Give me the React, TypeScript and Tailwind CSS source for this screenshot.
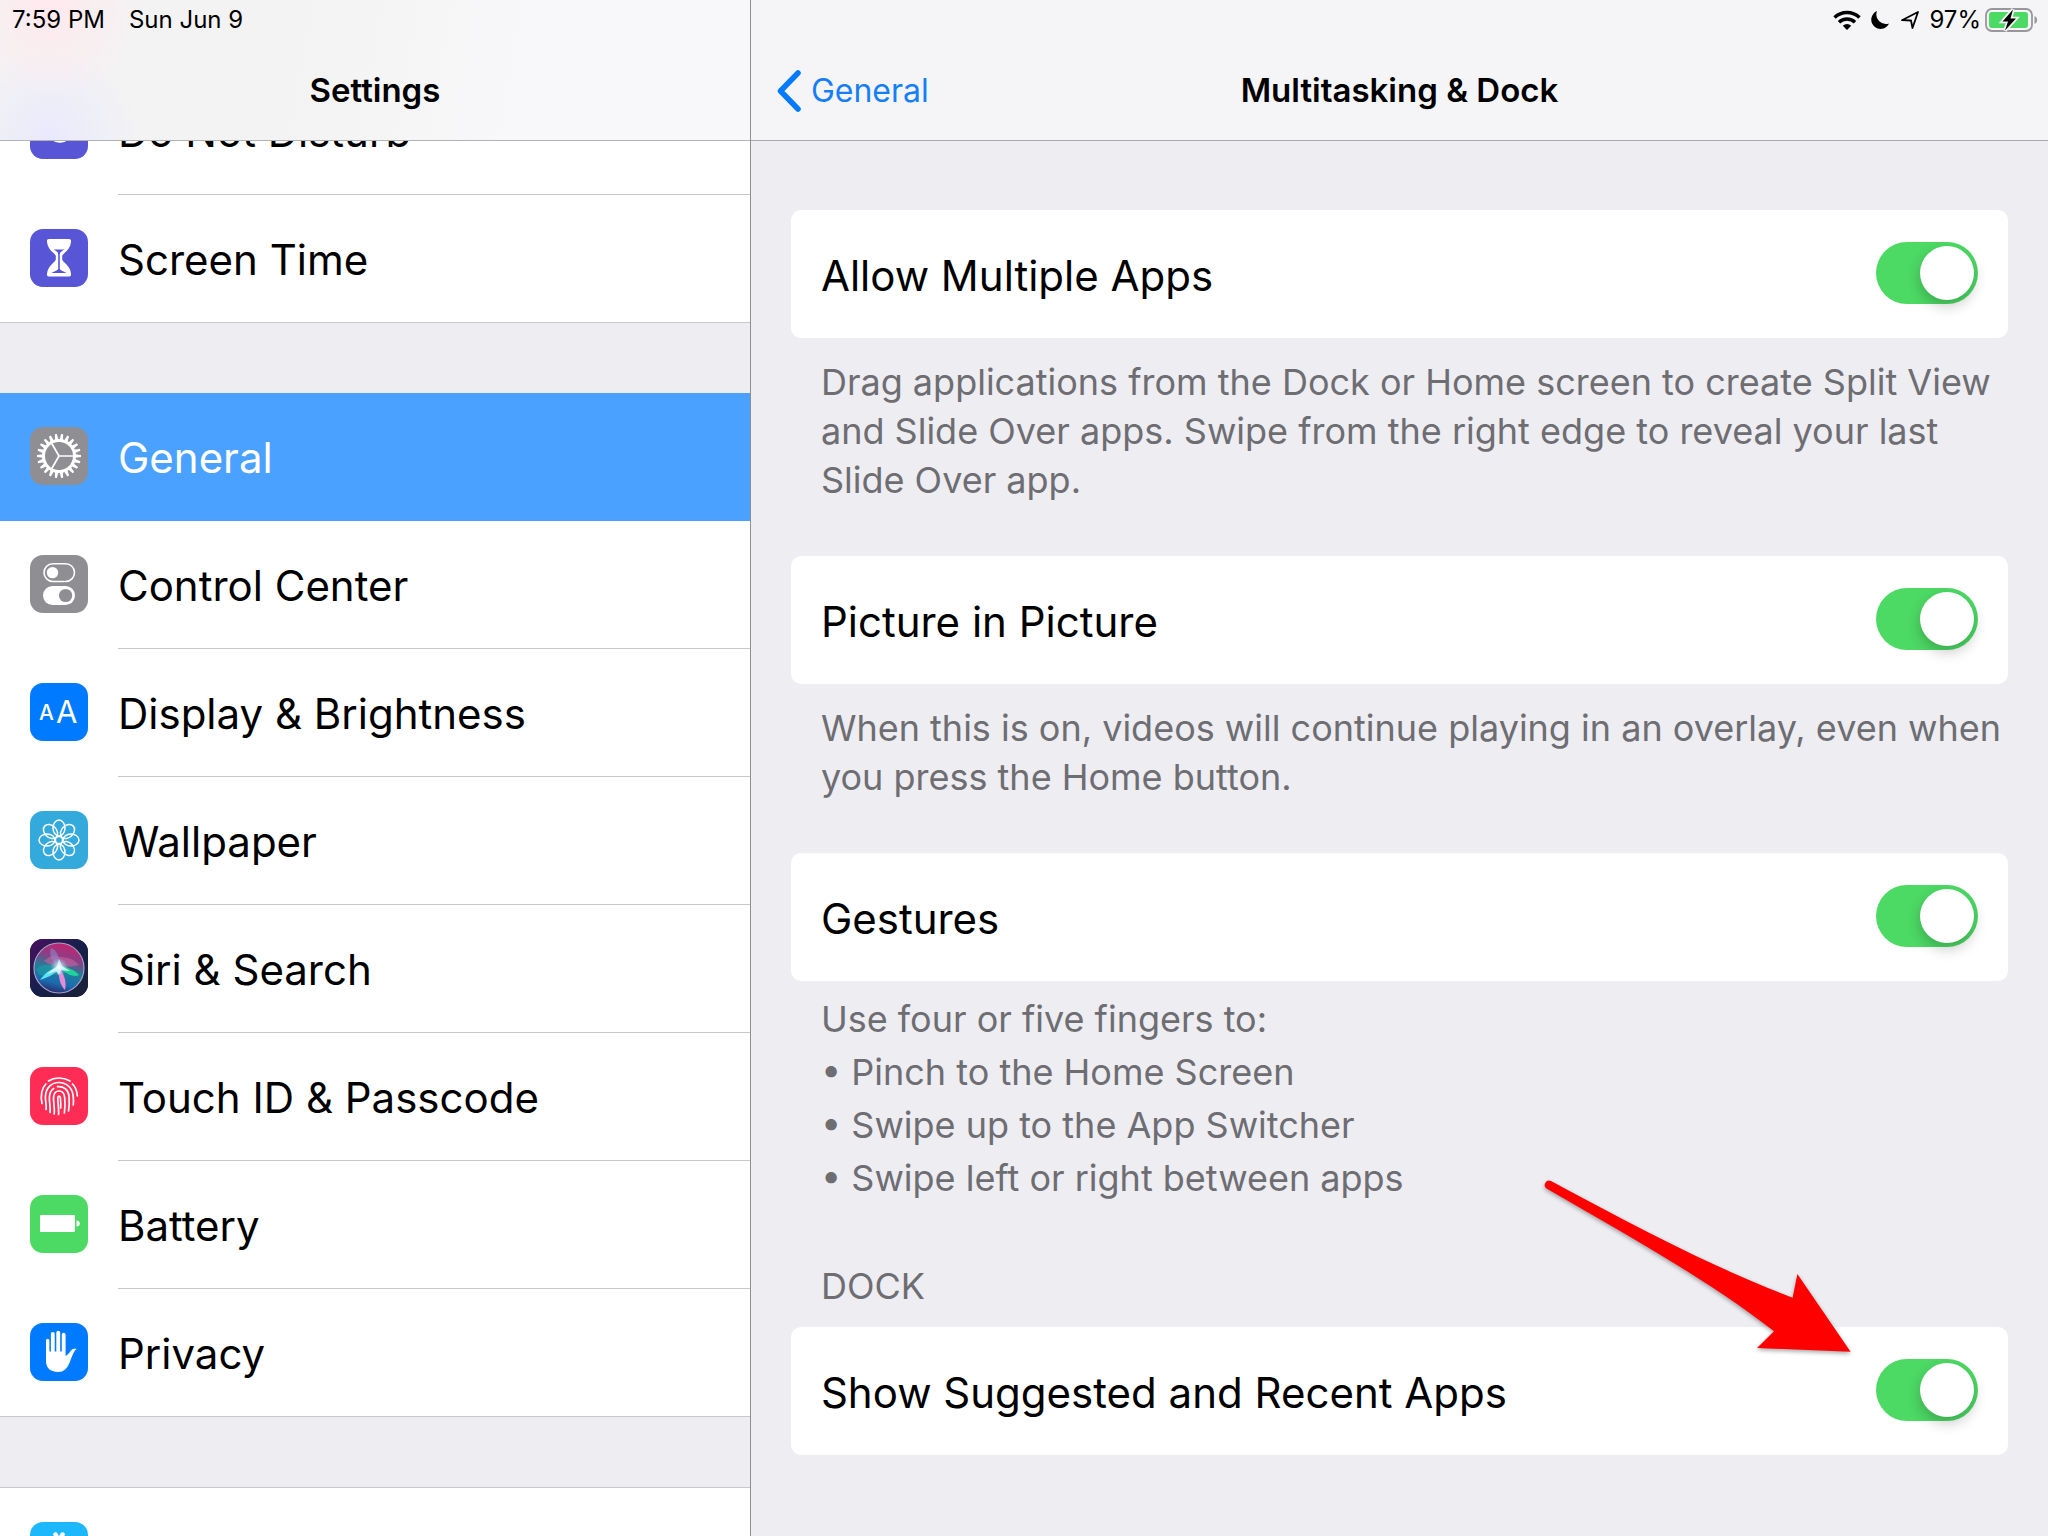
import React, { useState } from "react";

type IconProps = { children: React.ReactNode; bg: string };

function Tile({ children, bg }: IconProps) {
  return (
    <svg viewBox="0 0 58 58" className={"mb-0.5 size-[58px] shrink-0 rounded-[13px] " + bg} aria-hidden="true">
      {children}
    </svg>
  );
}

const ring = (n: number) => Array.from({ length: n }, (_, i) => (360 / n) * i);

const MoonIcon = () => (
  <Tile bg="bg-[#5856d6]">
    <path d="M24 16a13.500 13.500 0 1 0 18 18A13 13 0 0 1 24 16Z" fill="#fff" />
  </Tile>
);

const HourglassIcon = () => (
  <Tile bg="bg-[#5856d6]">
    <path
      d="M19 10h20c1.600 0 2.200 1 2 3-.6 5-3 7.800-6.500 11-2 2-3 3-3 4.800s1 2.800 3 4.700c3.500 3.300 6 6.500 6.500 11 .2 2-.5 3-2 3H19c-1.600 0-2.200-1-2-3 .6-4.500 3-7.700 6.500-11 2-1.900 3-2.900 3-4.700s-1-2.800-3-4.800C20 20.800 17.600 18 17 13c-.2-2 .4-3 2-3Z"
      fill="#fff"
    />
    <path d="M23.500 20.500h11c-2.500 1.200-4.500 2.500-4.700 4.500v15c.4 1.500 4.500 2.500 6.700 4h-15c2.200-1.500 6.300-2.500 6.700-4V25c-.2-2-2.200-3.300-4.700-4.500Z" fill="#5856d6" />
    <path d="M26.800 26v13.500M31.200 26v13.500" stroke="#fff" strokeWidth="2" />
  </Tile>
);

const GearIcon = () => (
  <Tile bg="bg-[#8e8e93]">
    <g stroke="#fff" fill="none">
      <circle cx="29" cy="29" r="15.500" strokeWidth="3" />
      {ring(22).map((a) => (
        <path key={a} d="M45 27.200L51 28v2l-6 .8Z" fill="#fff" stroke="none" transform={`rotate(${a} 29 29)`} />
      ))}
      {ring(3).map((a) => (
        <path key={a} d="M29 29h15" strokeWidth="1.700" transform={`rotate(${a} 29 29)`} />
      ))}
    </g>
  </Tile>
);

const SwitchesIcon = () => (
  <Tile bg="bg-[#8e8e93]">
    <rect x="14" y="8.700" width="30.500" height="17.800" rx="8.900" fill="none" stroke="#fff" strokeWidth="1.600" />
    <circle cx="22.500" cy="17.600" r="5.700" fill="#fff" />
    <rect x="13" y="31" width="32" height="19" rx="9.500" fill="#fff" />
    <circle cx="35.600" cy="40.500" r="6.600" fill="#8e8e93" />
  </Tile>
);

const TextSizeIcon = () => (
  <Tile bg="bg-[#007aff]">
    <text x="9" y="37" fontSize="21" fontWeight="500" fill="#fff">A</text>
    <text x="26" y="40" fontSize="31" fill="#fff">A</text>
  </Tile>
);

const FlowerIcon = () => (
  <Tile bg="bg-[#34aadc]">
    <g fill="none" stroke="#fff" strokeWidth="1.500">
      {ring(8).map((a) => (
        <ellipse key={a} cx="29" cy="17" rx="6" ry="8" transform={`rotate(${a} 29 29)`} />
      ))}
      <circle cx="29" cy="29" r="3.600" />
    </g>
  </Tile>
);

const SiriIcon = () => (
  <Tile bg="bg-[#1c1b3a]">
    <defs>
      <linearGradient id="siri-bg" x1="0" y1="0" x2="1" y2="1">
        <stop offset="0" stopColor="#4a1060" />
        <stop offset="0.500" stopColor="#14204a" />
        <stop offset="1" stopColor="#1b2136" />
      </linearGradient>
      <linearGradient id="siri-orb" x1="0.650" y1="0" x2="0.400" y2="1">
        <stop offset="0" stopColor="#c8206f" />
        <stop offset="0.300" stopColor="#8a3f86" />
        <stop offset="0.550" stopColor="#1f7f9a" />
        <stop offset="0.800" stopColor="#1b6cb0" />
        <stop offset="1" stopColor="#2a2a6c" />
      </linearGradient>
      <radialGradient id="siri-glow">
        <stop offset="0" stopColor="#fff" />
        <stop offset="0.400" stopColor="#c8f4ff" stopOpacity="0.600" />
        <stop offset="1" stopColor="#6fe0f0" stopOpacity="0" />
      </radialGradient>
    </defs>
    <rect width="58" height="58" fill="url(#siri-bg)" />
    <circle cx="29" cy="29" r="25" fill="url(#siri-orb)" stroke="#a79fc4" strokeWidth="1.200" />
    <path d="M14 22c6-5 11-7 15-4 8 0 15 2 20 8-8 2-14 2-20 2-6-1-11-3-15-6Z" fill="#e86aa6" opacity="0.450" />
    <path d="M21 9c7 3 9 11 9 19-6-3-12-10-9-19Z" fill="#8f86c8" opacity="0.600" />
    <path d="M6 30c6-5 14-6 23-2-5 8-13 10-20 8Z" fill="#20a5a8" opacity="0.500" />
    <path d="M29 27c7 0 16 4 20 9-5 3-14-1-20-9Z" fill="#1fd39b" />
    <path d="M10 41c5-7 11-12 20-13-3 6-11 10-20 13Z" fill="#5be3f2" />
    <path d="M29 28c5 7 8 15 6 23-5-5-7-13-6-23Z" fill="#e68bd6" />
    <path d="M17 35l10-8 2-7 3 7 8 5-9-1-2 5-3-4Z" fill="#fff" opacity="0.850" />
    <circle cx="29" cy="28" r="9" fill="url(#siri-glow)" />
  </Tile>
);

const FingerprintIcon = () => (
  <Tile bg="bg-[#ff2d55]">
    <g fill="none" stroke="#fff" strokeWidth="1.700" strokeLinecap="round">
      <path d="M18.500 14c6-4 15-4 21.500 0" />
      <path d="M12 36.500c-1.600-8-.8-14.500 3.800-19.500" />
      <path d="M42.500 17c3 3 4.600 7 4.800 12" />
      <path d="M16 42.500c.8-4-.8-8-.6-13C16 20.500 21.500 15.500 29 15.500S42.500 21 43.200 29c.3 3 .4 6 .1 9" />
      <path d="M20 45.500c.8-5-.9-10-.6-15.500.2-3.800 1.800-6.800 4.400-8.600" />
      <path d="M27.500 19.600c6.500-.6 10.800 3.400 11.500 9.400.5 5 .4 10-.5 15" />
      <path d="M24.200 47c.8-6-1-11.500-.7-16.500.3-4 2.500-6.500 5.500-6.500s5.300 2.500 5.700 6.500c.5 5 .4 10-.3 15.500" />
      <path d="M28.600 47.500c.4-6-.9-12-.8-16.500 0-2.400 2.400-2.400 2.600 0 .4 4 .5 7 .3 10" />
    </g>
  </Tile>
);

const BatteryIcon = () => (
  <Tile bg="bg-[#4cd964]">
    <rect x="10" y="20" width="35" height="17" rx="1" fill="#fff" />
    <path d="M46.500 25.500c4.500 0 4.500 6 0 6Z" fill="#fff" />
  </Tile>
);

const HandIcon = () => (
  <Tile bg="bg-[#007aff]">
    <path
      d="M16 38V17.500a1.700 1.700 0 0 1 3.400 0V28.500h1.500V10.800a1.900 1.900 0 0 1 3.800 0V28.500h1.600V9.800a1.900 1.900 0 0 1 3.900 0V28.500h1.600V11.600a1.900 1.900 0 0 1 3.800 0V33c2-1.200 3.600-3 5-5 1.400-2 3.300-2.400 6-2-2.200 1.600-3.200 4-4.200 6.500C40 37 38.500 49 28.500 49 20.500 49 16 45 16 38Z"
      fill="#fff"
    />
  </Tile>
);

const StoreIcon = () => (
  <Tile bg="bg-[#1cb8fb]">
    <path d="M25.500 12.500L40 40M32.500 12.500L18 38M13 32h32" stroke="#fff" strokeWidth="4.500" strokeLinecap="round" />
  </Tile>
);

type Item = { label: string; icon: React.ReactNode; selected?: boolean };

const groups: Item[][] = [
  [
    { label: "Do Not Disturb", icon: <MoonIcon /> },
    { label: "Screen Time", icon: <HourglassIcon /> },
  ],
  [
    { label: "General", icon: <GearIcon />, selected: true },
    { label: "Control Center", icon: <SwitchesIcon /> },
    { label: "Display & Brightness", icon: <TextSizeIcon /> },
    { label: "Wallpaper", icon: <FlowerIcon /> },
    { label: "Siri & Search", icon: <SiriIcon /> },
    { label: "Touch ID & Passcode", icon: <FingerprintIcon /> },
    { label: "Battery", icon: <BatteryIcon /> },
    { label: "Privacy", icon: <HandIcon /> },
  ],
  [{ label: "iTunes & App Store", icon: <StoreIcon /> }],
];

function SidebarRow({ item, last }: { item: Item; last: boolean }) {
  const line = last || item.selected ? "border-transparent" : "border-[#c8c7cc]";
  return (
    <li
      className={
        (item.selected ? "bg-[#4ba1ff] text-white" : "bg-white") + (last ? " shadow-[inset_0_-1px_#c8c7cc]" : "")
      }
    >
      <button className="flex h-32 w-full items-center gap-[30px] pl-[30px] text-left text-[42px]">
        {item.icon}
        <span className={"flex h-full flex-1 items-center border-b pt-0.5 whitespace-nowrap " + line}>{item.label}</span>
      </button>
    </li>
  );
}

function Sidebar() {
  return (
    <nav aria-label="Settings" className="flex min-h-0 flex-col border-r border-[#8e8e93] bg-[#eeedf2]">
      <header className="flex h-[141px] shrink-0 flex-col border-b border-[#b2b2b6] bg-[#f7f7f8] bg-[radial-gradient(circle_at_50px_10px,#ffe9ee,transparent_90px),radial-gradient(circle_at_50px_140px,#e9e9fd,transparent_90px),linear-gradient(100deg,#f3f3f3_40%,#f8f8fa_70%)]">
        <div className="flex h-10 items-center gap-6 pl-3 text-[24px]">
          <span>7:59 PM</span>
          <span>Sun Jun 9</span>
        </div>
        <h1 className="flex flex-1 items-center justify-center pt-0.5 text-[33px] font-semibold">Settings</h1>
      </header>
      <div className="min-h-0 flex-1 overflow-hidden">
        <div className="-mt-[74px] flex flex-col gap-[70px]">
          {groups.map((group, g) => (
            <ul key={g} className={g === 2 ? "border-t border-[#c8c7cc]" : ""}>
              {group.map((item, i) => (
                <SidebarRow key={item.label} item={item} last={i === group.length - 1} />
              ))}
            </ul>
          ))}
        </div>
      </div>
    </nav>
  );
}

function ToggleCard({ label, children }: { label: string; children?: React.ReactNode }) {
  const [on, setOn] = useState(true);
  return (
    <label className="relative flex h-32 items-center justify-between rounded-[10px] bg-white px-[30px] text-[42px]">
      <span className="pt-0.5 whitespace-nowrap">{label}</span>
      <input
        type="checkbox"
        role="switch"
        checked={on}
        onChange={() => setOn(!on)}
        className="mb-0.5 flex h-[62px] w-[102px] appearance-none items-center rounded-full bg-[#d1d1d6] p-1 before:size-[54px] before:rounded-full before:bg-white before:shadow-[0_6px_14px_rgba(0,0,0,0.22)] checked:justify-end checked:bg-[#4cd964]"
      />
      {children}
    </label>
  );
}

function StatusIcons() {
  return (
    <div className="flex h-10 items-center justify-end pr-2.5 text-[24px]">
      <svg viewBox="0 0 28 20" className="mr-2.5 h-5 w-7" aria-label="Wi-Fi">
        <g fill="none" stroke="#000" strokeWidth="3.400">
          <path d="M1.500 7.500a18 18 0 0 1 25 0" />
          <path d="M6 12.300a11.500 11.500 0 0 1 16 0" />
        </g>
        <path d="M14 20l-4.200-4.300a6 6 0 0 1 8.400 0Z" />
      </svg>
      <svg viewBox="0 0 18 18" className="mr-3 size-[18px]" aria-label="Do Not Disturb">
        <path d="M6 0A9.300 9.300 0 1 0 18 12.500 9.600 9.600 0 0 1 6 0Z" />
      </svg>
      <svg viewBox="0 0 18 18" className="mr-2.5 size-[18px]" aria-label="Location">
        <path d="M1 9.200L17 1 11.500 17 10 9.500Z" fill="none" stroke="#000" strokeWidth="1.800" strokeLinejoin="round" />
      </svg>
      <span className="mr-1">97%</span>
      <svg viewBox="0 0 53 24" className="h-6 w-[53px]" aria-label="Battery charging">
        <rect x="1" y="1" width="46" height="22" rx="6" fill="none" stroke="#98989c" strokeWidth="1.800" />
        <rect x="4" y="4" width="39" height="16" rx="3" fill="#4cd964" />
        <path d="M49.500 8c3.500 1.200 3.500 6.800 0 8Z" fill="#98989c" />
        <path d="M28 1.500L17.500 13.500h5.500L20 22.500 31 10.500H25.500Z" fill="#000" stroke="#f5f5f7" strokeWidth="3.500" paintOrder="stroke" />
      </svg>
    </div>
  );
}

function Arrow() {
  return (
    <svg viewBox="0 0 320 190" className="pointer-events-none absolute right-[148px] -top-[152px] h-[190px] w-80 overflow-visible drop-shadow-[0_2px_2px_rgba(0,0,0,0.35)]" aria-hidden="true">
      <path d="M11 6C97 52 172 92 252.600 122.700L257.400 99 310.600 176.700 217 173 234 156.300C170 106 90 62 6.500 13.500A4.400 4.400 0 0 1 11 6Z" fill="#f00" />
    </svg>
  );
}

const note = "pl-[30px] text-[36px] leading-[49px] text-[#6d6d72]";

export default function App() {
  return (
    <div className="grid h-screen grid-cols-[minmax(0,11fr)_minmax(0,19fr)] grid-rows-[minmax(0,1fr)] overflow-hidden bg-[#eeedf2] font-['Inter',sans-serif] text-black">
      <Sidebar />
      <main className="flex min-h-0 flex-col">
        <header className="flex h-[141px] shrink-0 flex-col border-b border-[#a9a9ae] bg-[#f5f5f7]">
          <StatusIcons />
          <div className="grid flex-1 grid-cols-[1fr_auto_1fr] items-center pt-0.5 text-[33px]">
            <button className="flex items-center gap-2.5 pl-[26px] text-[32px] text-[#157efb]">
              <svg viewBox="0 0 24 42" className="h-[42px] w-6" aria-hidden="true">
                <path d="M21 3L3.500 21 21 39" fill="none" stroke="#007aff" strokeWidth="5.500" strokeLinecap="round" strokeLinejoin="round" />
              </svg>
              General
            </button>
            <h2 className="font-semibold">Multitasking &amp; Dock</h2>
          </div>
        </header>
        <div className="flex min-h-0 flex-1 flex-col px-10 pt-[69px]">
          <ToggleCard label="Allow Multiple Apps" />
          <p className={note + " mt-5"}>
            Drag applications from the Dock or Home screen to create Split View and Slide Over apps. Swipe from the right edge to reveal your last Slide Over app.
          </p>
          <div className="mt-[51px]">
            <ToggleCard label="Picture in Picture" />
          </div>
          <p className={note + " mt-5"}>When this is on, videos will continue playing in an overlay, even when you press the Home button.</p>
          <div className="mt-[51px]">
            <ToggleCard label="Gestures" />
          </div>
          <div className="mt-3 pl-[30px] text-[36px] leading-[53px] text-[#6d6d72]">
            <p>Use four or five fingers to:</p>
            <ul>
              <li>• Pinch to the Home Screen</li>
              <li>• Swipe up to the App Switcher</li>
              <li>• Swipe left or right between apps</li>
            </ul>
          </div>
          <h3 className={note + " mt-[57px] mb-4"}>DOCK</h3>
          <ToggleCard label="Show Suggested and Recent Apps">
            <Arrow />
          </ToggleCard>
        </div>
      </main>
    </div>
  );
}
